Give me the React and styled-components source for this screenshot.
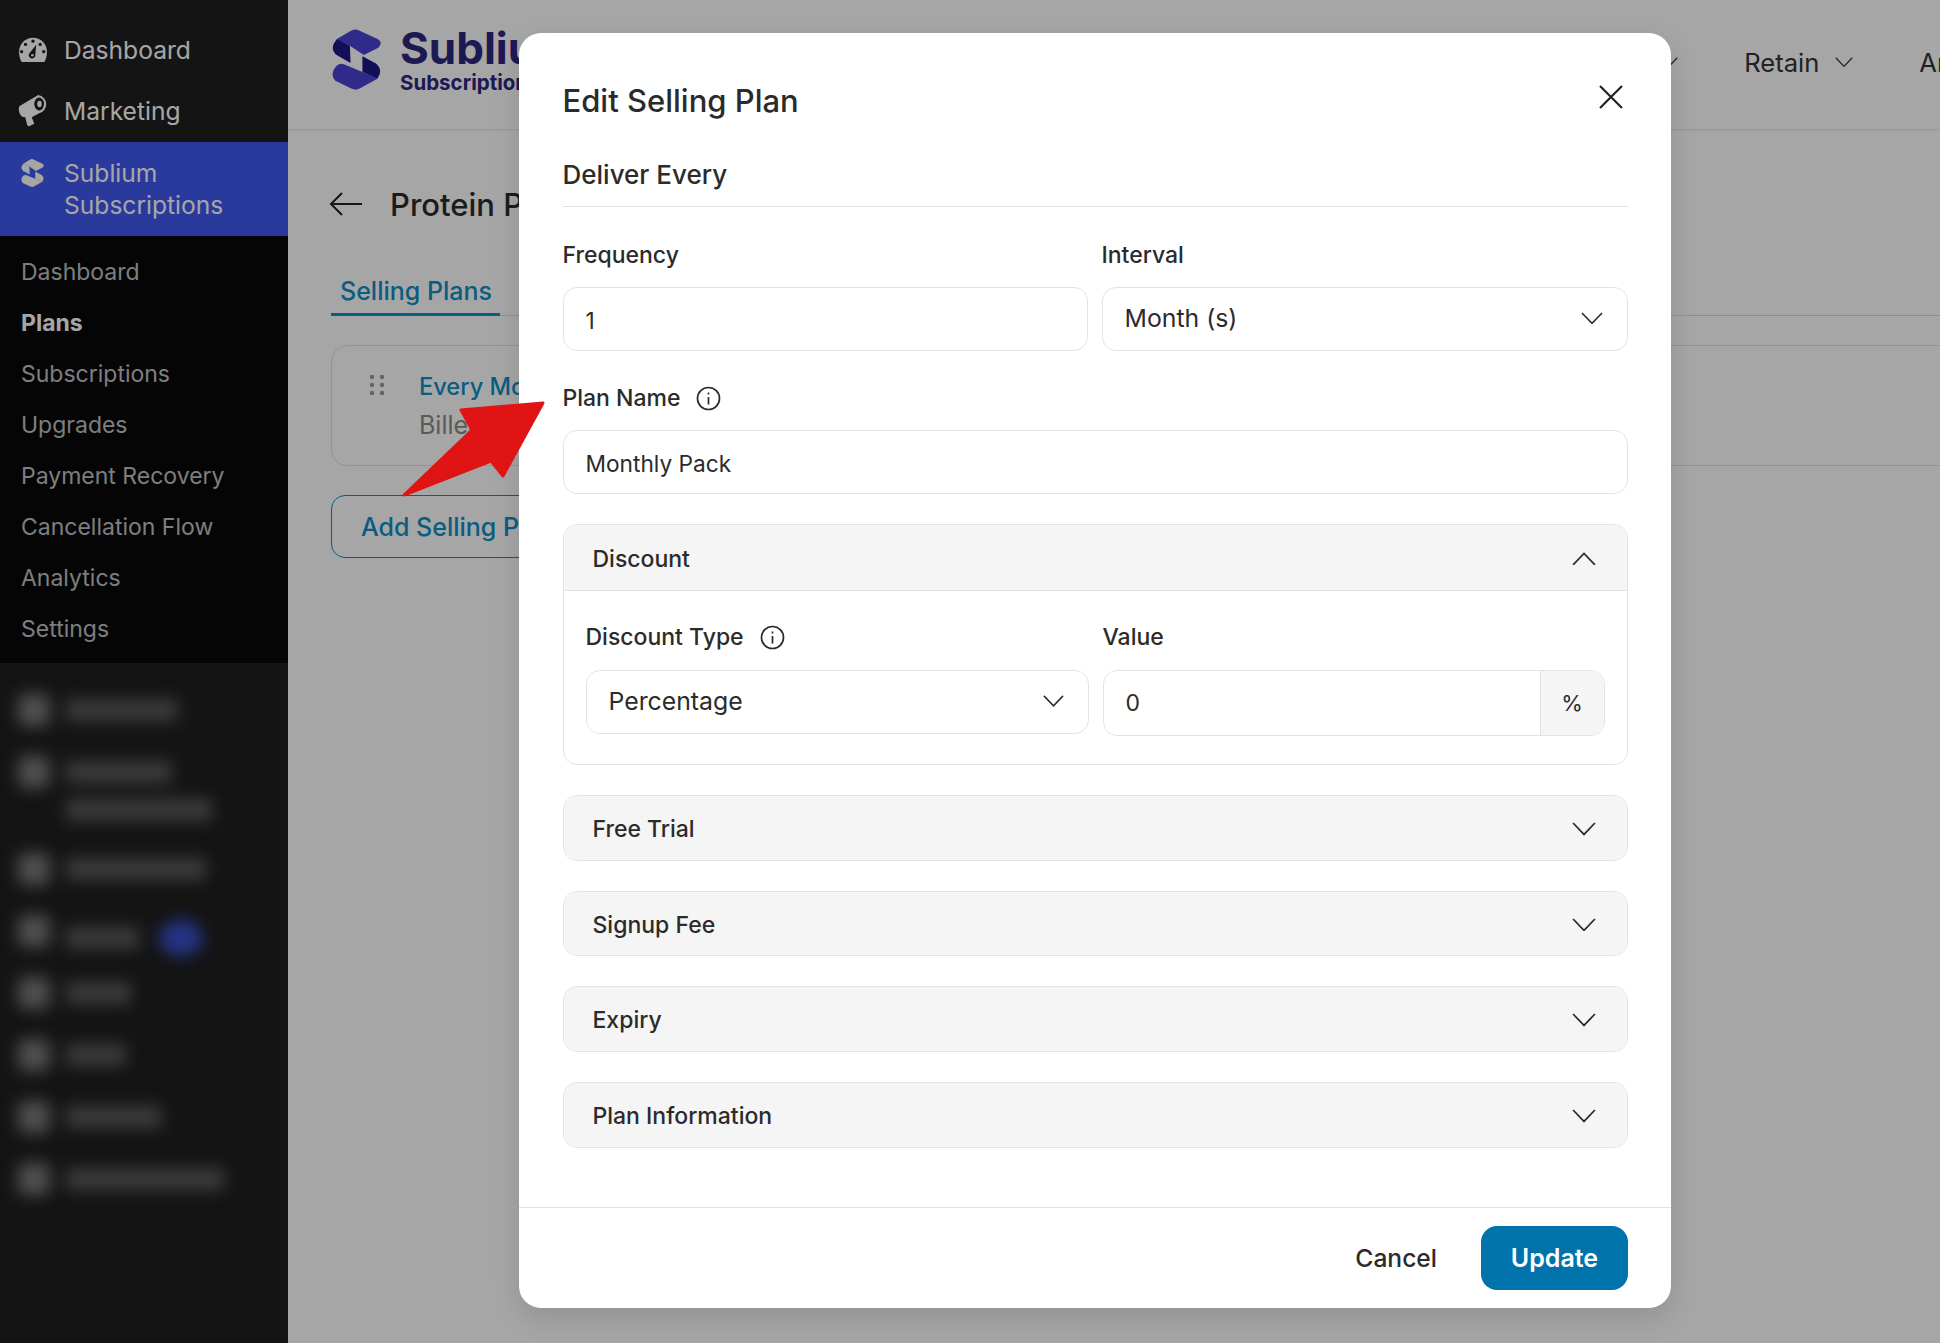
import React from 'react';
import styled, { createGlobalStyle } from 'styled-components';

const GlobalStyle = createGlobalStyle`
  * { box-sizing: border-box; }
  html, body { margin: 0; padding: 0; }
  body { font-family: Inter, "Noto Sans", sans-serif; background: #fff; color: #2b2b2b; }
`;

const Page = styled.div`
  position: relative;
  display: flex;
  width: 1940px;
  height: 1343px;
  overflow: hidden;
  background: #fff;
`;

const Overlay = styled.div`
  position: absolute;
  inset: 0;
  background: rgba(0, 0, 0, 0.35);
`;

/* sidebar */
const Sidebar = styled.aside`
  width: 288px;
  flex-shrink: 0;
  background: #1f1f1f;
  padding-top: 20px;
`;

const TopItem = styled.div`
  display: flex;
  align-items: center;
  height: 61px;
  padding: 0 0 2px 17px;
  font-size: 24.6px;
  color: #fff;
`;

const ActiveItem = styled.div`
  display: flex;
  height: 94px;
  padding: 15px 0 0 17px;
  font-size: 24.6px;
  line-height: 32px;
  color: #fff;
  background: #4059f0;
`;

const IconSlot = styled.span`
  display: flex;
  align-items: flex-start;
  width: 47px;
  padding-left: ${p => p.$pad || 1}px;
  padding-top: ${p => p.$top || 0}px;
  flex-shrink: 0;
`;

const SubMenu = styled.ul`
  list-style: none;
  margin: 0;
  padding: 11px 0 8px;
  background: #090909;
`;

const SubItem = styled.li`
  height: 51px;
  line-height: 51px;
  padding-left: 21px;
  font-size: 23px;
  font-weight: ${p => (p.$active ? 700 : 400)};
  color: ${p => (p.$active ? '#fff' : '#c2c2c2')};
`;

const BlurredMenu = styled.div`
  padding-top: 17px;
  filter: blur(8px);
`;

const BlurRow = styled.div`
  display: flex;
  gap: 16px;
  height: ${p => (p.$double ? 97 : 62)}px;
  padding: 14px 0 0 18px;
`;

const BlurIcon = styled.div`
  width: 32px;
  height: 32px;
  border-radius: 6px;
  background: #7a7a7a;
`;

const BlurLines = styled.div`
  display: flex;
  flex-direction: column;
  gap: 16px;
  padding-top: 5px;
`;

const BlurLine = styled.div`
  width: ${p => p.$w}px;
  height: 22px;
  background: #5c5c5c;
`;

const BlurBadge = styled.div`
  flex-shrink: 0;
  width: 44px;
  height: 36px;
  border-radius: 50%;
  background: #3a50d0;
`;

const BlurLineWrap = styled.div`
  display: flex;
  align-items: center;
  gap: 20px;
`;

/* page behind the dialog */
const Main = styled.main`
  flex: 1;
  min-width: 0;
  overflow: hidden;
`;

const Header = styled.header`
  display: flex;
  align-items: center;
  height: 130px;
  padding-left: 42px;
  border-bottom: 1px solid #ececec;
  box-shadow: 0 1px 3px rgba(0, 0, 0, 0.04);
`;

const Brand = styled.div`
  display: flex;
  gap: 17px;
  width: 301px;
  flex-shrink: 0;
  margin-top: -8px;
`;

const BrandText = styled.div`
  display: flex;
  flex-direction: column;
  margin-top: -2px;
`;

const BrandName = styled.span`
  font-size: 44px;
  line-height: 46px;
  font-weight: 700;
  color: #2d2780;
`;

const BrandSub = styled.span`
  font-size: 20.5px;
  line-height: 24px;
  font-weight: 700;
  color: #2d2780;
`;

const TopNav = styled.nav`
  display: flex;
  gap: 66px;
  margin-left: 949px;
  flex-shrink: 0;
  margin-top: -4px;
`;

const NavItem = styled.div`
  display: flex;
  align-items: center;
  gap: 16px;
  font-size: 25.6px;
  color: #333;
`;

const Content = styled.div`
  padding-left: 43px;
`;

const PageHead = styled.div`
  display: flex;
  align-items: center;
  gap: 27px;
  height: 40px;
  margin-top: 54px;
  margin-left: -2px;
`;

const PageTitle = styled.h1`
  margin: 0;
  font-size: 31px;
  font-weight: 500;
  color: #2b2b2b;
`;

const Tabs = styled.div`
  display: flex;
  margin-top: 52px;
  border-bottom: 1px solid #dcdcdc;
`;

const Tab = styled.div`
  width: 169px;
  padding: 0 9px 7px;
  margin-bottom: -1px;
  font-size: 25px;
  line-height: 30px;
  font-weight: 500;
  white-space: nowrap;
  color: #0f8fc6;
  border-bottom: 3px solid #0f8fc6;
`;

const PlanCard = styled.div`
  display: flex;
  gap: 34px;
  height: 121px;
  margin: 29px -20px 0 0;
  padding: 22px 0 0 37px;
  border: 1px solid #e4e4e4;
  border-radius: 16px;
`;

const GripSlot = styled.span`
  padding-top: 6px;
`;

const PlanName = styled.div`
  font-size: 23.6px;
  line-height: 38px;
  font-weight: 500;
  color: #0f8fc6;
`;

const PlanMeta = styled.div`
  font-size: 25px;
  line-height: 38px;
  color: #8a8a8a;
`;

const AddButton = styled.button`
  display: block;
  width: 260px;
  height: 63px;
  margin-top: 29px;
  padding: 0 0 0 29px;
  font: 500 25px Inter, sans-serif;
  text-align: left;
  color: #0f8fc6;
  background: transparent;
  border: 1px solid #0f8fc6;
  border-radius: 14px;
`;

/* dialog */
const Modal = styled.section`
  position: absolute;
  top: 33px;
  left: 519px;
  display: flex;
  flex-direction: column;
  width: 1152px;
  height: 1275px;
  background: #fff;
  border-radius: 22px;
  box-shadow: 0 10px 30px rgba(0, 0, 0, 0.12);
`;

const ModalBody = styled.div`
  flex: 1;
  padding: 50px 43.5px 0 43.5px;
`;

const ModalHead = styled.div`
  display: flex;
  justify-content: space-between;
  align-items: flex-start;
`;

const ModalTitle = styled.h2`
  margin: 0;
  font-size: 31px;
  line-height: 36px;
  font-weight: 500;
  color: #2b2b2b;
`;

const CloseButton = styled.button`
  display: flex;
  margin: 1px 4px 0 0;
  padding: 0;
  background: none;
  border: 0;
`;

const SectionTitle = styled.h3`
  margin: 40px 0 0;
  padding-bottom: 15px;
  font-size: 26px;
  line-height: 32px;
  font-weight: 500;
  color: #2b2b2b;
  border-bottom: 1px solid #e3e3e3;
`;

const Columns = styled.div`
  display: grid;
  grid-template-columns: ${p => p.$left}px 1fr;
  gap: 14px;
  margin-top: ${p => p.$top}px;
`;

const Field = styled.div`
  margin-top: ${p => p.$top || 0}px;
`;

const Label = styled.label`
  display: flex;
  align-items: center;
  gap: 16px;
  height: 28px;
  margin-bottom: ${p => p.$gap || 18}px;
  font-size: 23px;
  font-weight: 500;
  color: #2b2b2b;
`;

const TextBox = styled.div`
  display: flex;
  align-items: center;
  height: 64px;
  padding: 2px 22px 0;
  font-size: 22.7px;
  color: #2b2b2b;
  border: 1px solid #e3e3e3;
  border-radius: 14px;
`;

const SelectBox = styled(TextBox)`
  justify-content: space-between;
  padding: 0 24px 2px 22px;
  font-size: 24.8px;
`;

const InputGroup = styled.div`
  display: flex;
  height: 66px;
  border: 1px solid #e3e3e3;
  border-radius: 14px;
  overflow: hidden;
`;

const GroupValue = styled.div`
  display: flex;
  align-items: center;
  flex: 1;
  padding: 0 22px;
  font-size: 23px;
`;

const GroupAddon = styled.div`
  display: flex;
  align-items: center;
  justify-content: center;
  width: 64px;
  font-size: 22px;
  background: #f5f5f5;
  border-left: 1px solid #e3e3e3;
`;

const Accordion = styled.div`
  margin-top: 30px;
  border: 1px solid #e3e3e3;
  border-radius: 14px;
  overflow: hidden;
`;

const AccordionHead = styled.div`
  display: flex;
  align-items: center;
  justify-content: space-between;
  height: ${p => (p.$open ? 66 : 63.7)}px;
  padding: 2px 31px 0 29px;
  font-size: 23px;
  font-weight: 500;
  background: #f5f5f5;
  border-bottom: ${p => (p.$open ? '1px solid #e3e3e3' : '0')};
`;

const AccordionBody = styled.div`
  padding: 32px 22px 28px;
`;

const ModalFooter = styled.footer`
  display: flex;
  justify-content: flex-end;
  align-items: center;
  gap: 44px;
  height: 101px;
  padding-right: 43px;
  border-top: 1px solid #e3e3e3;
`;

const CancelButton = styled.button`
  padding: 0;
  font: 500 24.6px Inter, sans-serif;
  color: #2b2b2b;
  background: none;
  border: 0;
`;

const UpdateButton = styled.button`
  width: 147px;
  height: 64px;
  padding: 0;
  font: 600 25px Inter, sans-serif;
  color: #fff;
  background: #0073aa;
  border: 0;
  border-radius: 16px;
`;

const Pointer = styled.svg`
  position: absolute;
  top: 395px;
  left: 395px;
`;

const Chevron = ({ up, size = 24, color = '#2b2b2b' }) => (
  <svg width={size} height={size * 0.58} viewBox="0 0 24 14" fill="none" stroke={color} strokeWidth="1.7">
    <polyline points={up ? '1,13 12,1.5 23,13' : '1,1 12,12.5 23,1'} />
  </svg>
);

const InfoIcon = () => (
  <svg width="25" height="25" viewBox="0 0 25 25" fill="none" stroke="#2b2b2b" strokeWidth="1.7">
    <circle cx="12.5" cy="12.5" r="11" />
    <line x1="12.5" y1="11" x2="12.5" y2="18.5" />
    <line x1="12.5" y1="6.5" x2="12.5" y2="8.5" />
  </svg>
);

const SubliumMark = ({ width, height, light, dark }) => (
  <svg width={width} height={height} viewBox="30 20 160 195">
    <path d="M52 55L95 30Q105 24 116 29L172 55Q192 66 176 82L132 104L90 76Z" fill={light} />
    <path d="M52 55L90 76L92 128L50 104Q26 84 52 55Z" fill={dark} />
    <path d="M128 108L170 130Q192 152 172 176L128 155Z" fill={dark} />
    <path d="M50 136Q60 128 72 132L128 155L172 176L118 206Q108 211 96 206L46 182Q28 160 50 136Z" fill={light} />
  </svg>
);

const GaugeIcon = () => (
  <svg width="30" height="26" viewBox="38 20 90 80">
    <path d="M83 22C58 22 40 42 40 66 40 77 43 88 48 97L118 97C123 88 126 77 126 66 126 42 108 22 83 22Z" fill="#fff" />
    <g fill="#1f1f1f">
      <circle cx="83" cy="33" r="5" />
      <circle cx="60" cy="43" r="5" />
      <circle cx="105" cy="43" r="5" />
      <circle cx="48" cy="65" r="5" />
      <circle cx="116" cy="65" r="5" />
      <path d="M93 44L90 74A10 10 0 1 1 74 68Z" />
    </g>
    <circle cx="81" cy="76" r="4" fill="#fff" />
  </svg>
);

const MegaphoneIcon = () => (
  <svg width="31" height="33" viewBox="36 12 95 102">
    <path d="M38 62Q36 50 46 46L98 15A29 29 0 0 1 100 72L78 84L86 104L70 112Q66 112 64 108L58 84L48 82Q40 76 38 62Z" fill="#fff" />
    <ellipse cx="101" cy="43" rx="15" ry="20" fill="#1f1f1f" />
    <ellipse cx="102" cy="43" rx="7" ry="10" fill="#fff" />
  </svg>
);

const ArrowLeft = () => (
  <svg width="34" height="26" viewBox="0 0 34 26" fill="none" stroke="#222" strokeWidth="2">
    <path d="M33 13H2M13 2L2 13l11 11" />
  </svg>
);

const CloseIcon = () => (
  <svg width="26" height="26" viewBox="0 0 26 26" fill="none" stroke="#222" strokeWidth="2.200">
    <path d="M2 2l22 22M24 2L2 24" />
  </svg>
);

const GripIcon = () => (
  <svg width="16" height="22" viewBox="0 0 16 22" fill="#999">
    <circle cx="3" cy="3" r="2.200" />
    <circle cx="13" cy="3" r="2.200" />
    <circle cx="3" cy="11" r="2.200" />
    <circle cx="13" cy="11" r="2.200" />
    <circle cx="3" cy="19" r="2.200" />
    <circle cx="13" cy="19" r="2.200" />
  </svg>
);

const subItems = ['Dashboard', 'Plans', 'Subscriptions', 'Upgrades', 'Payment Recovery', 'Cancellation Flow', 'Analytics', 'Settings'];

const blurRows = [
  { lines: [112] },
  { lines: [106, 146] },
  { lines: [140] },
  { lines: [73], badge: true },
  { lines: [65] },
  { lines: [60] },
  { lines: [96] },
  { lines: [158] },
];

const closedSections = ['Free Trial', 'Signup Fee', 'Expiry', 'Plan Information'];

export default function App() {
  return (
    <Page>
      <GlobalStyle />
      <Sidebar>
        <TopItem><IconSlot><GaugeIcon /></IconSlot>Dashboard</TopItem>
        <TopItem><IconSlot><MegaphoneIcon /></IconSlot>Marketing</TopItem>
        <ActiveItem>
          <IconSlot $pad={3} $top={1}>
            <SubliumMark width={25} height={30} light="#fff" dark="#fff" />
          </IconSlot>
          <div>Sublium<br />Subscriptions</div>
        </ActiveItem>
        <SubMenu>
          {subItems.map(item => (
            <SubItem key={item} $active={item === 'Plans'}>{item}</SubItem>
          ))}
        </SubMenu>
        <BlurredMenu>
          {blurRows.map((row, i) => (
            <BlurRow key={i} $double={row.lines.length > 1}>
              <BlurIcon />
              <BlurLines>
                {row.lines.map(w => (
                  <BlurLineWrap key={w}>
                    <BlurLine $w={w} />
                    {row.badge && <BlurBadge />}
                  </BlurLineWrap>
                ))}
              </BlurLines>
            </BlurRow>
          ))}
        </BlurredMenu>
      </Sidebar>

      <Main>
        <Header>
          <Brand>
            <SubliumMark width={53} height={65} light="#4a42d4" dark="#1e1688" />
            <BrandText>
              <BrandName>Sublium</BrandName>
              <BrandSub>Subscriptions</BrandSub>
            </BrandText>
          </Brand>
          <TopNav>
            <NavItem>Grow<Chevron size={18} color="#333" /></NavItem>
            <NavItem>Retain<Chevron size={18} color="#333" /></NavItem>
            <NavItem>Analytics</NavItem>
          </TopNav>
        </Header>
        <Content>
          <PageHead>
            <ArrowLeft />
            <PageTitle>Protein Pack</PageTitle>
          </PageHead>
          <Tabs><Tab>Selling Plans</Tab></Tabs>
          <PlanCard>
            <GripSlot><GripIcon /></GripSlot>
            <div>
              <PlanName>Every Month</PlanName>
              <PlanMeta>Billed Monthly</PlanMeta>
            </div>
          </PlanCard>
          <AddButton>Add Selling Plan</AddButton>
        </Content>
      </Main>

      <Overlay />

      <Modal>
        <ModalBody>
          <ModalHead>
            <ModalTitle>Edit Selling Plan</ModalTitle>
            <CloseButton><CloseIcon /></CloseButton>
          </ModalHead>
          <SectionTitle>Deliver Every</SectionTitle>
          <Columns $left={525} $top={34}>
            <Field>
              <Label>Frequency</Label>
              <TextBox>1</TextBox>
            </Field>
            <Field>
              <Label>Interval</Label>
              <SelectBox>Month (s)<Chevron size={22} /></SelectBox>
            </Field>
          </Columns>
          <Field $top={33}>
            <Label>Plan Name<InfoIcon /></Label>
            <TextBox>Monthly Pack</TextBox>
          </Field>
          <Accordion>
            <AccordionHead $open>Discount<Chevron up /></AccordionHead>
            <AccordionBody>
              <Columns $left={503} $top={0}>
                <Field>
                  <Label $gap={19}>Discount Type<InfoIcon /></Label>
                  <SelectBox>Percentage<Chevron size={21} /></SelectBox>
                </Field>
                <Field>
                  <Label $gap={19}>Value</Label>
                  <InputGroup>
                    <GroupValue>0</GroupValue>
                    <GroupAddon>%</GroupAddon>
                  </InputGroup>
                </Field>
              </Columns>
            </AccordionBody>
          </Accordion>
          {closedSections.map(title => (
            <Accordion key={title}>
              <AccordionHead>{title}<Chevron /></AccordionHead>
            </Accordion>
          ))}
        </ModalBody>
        <ModalFooter>
          <CancelButton>Cancel</CancelButton>
          <UpdateButton>Update</UpdateButton>
        </ModalFooter>
      </Modal>

      <Pointer width="155" height="110" viewBox="395 395 155 110">
        <polygon
          points="404,495 472,430 461,410 543,403 503,476 491,461"
          fill="#e01414"
          stroke="#e01414"
          strokeWidth="3"
          strokeLinejoin="round"
        />
      </Pointer>
    </Page>
  );
}
